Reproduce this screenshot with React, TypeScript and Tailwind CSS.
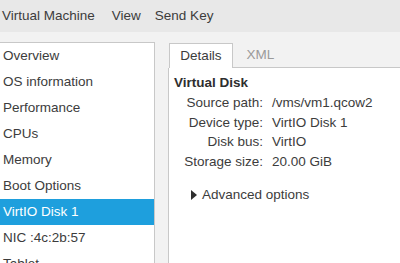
const items = [
    "Overview",
    "OS information",
    "Performance",
    "CPUs",
    "Memory",
    "Boot Options",
    "VirtIO Disk 1",
    "NIC :4c:2b:57",
    "Tablet",
];

const rows = [
    ["Source path:", "/vms/vm1.qcow2"],
    ["Device type:", "VirtIO Disk 1"],
    ["Disk bus:", "VirtIO"],
    ["Storage size:", "20.00 GiB"],
];

const App = () => {
    return (
        <div
            className="w-[400px] h-[263px] overflow-hidden bg-[#f2f2f2] text-[#3c3c3c] text-[13.5px]"
            style={{ fontFamily: '"Liberation Sans", Arial, sans-serif' }}
        >
            <div className="flex items-center h-[32px] bg-[#e8e8e8] pl-[2px]">
                <span className="mr-[17px]">Virtual Machine</span>
                <span className="mr-[14px]">View</span>
                <span>Send Key</span>
            </div>
            <div className="flex pt-[10px]">
                <div className="w-[155px] h-[230px] bg-white border-t border-r border-[#c8c8c8] shrink-0">
                    {items.map((item) => (
                        <div
                            key={item}
                            className={
                                item === "VirtIO Disk 1"
                                    ? "h-[26px] flex items-center pl-[3px] bg-[#1e9fdd] text-white"
                                    : "h-[26px] flex items-center pl-[3px]"
                            }
                        >
                            {item}
                        </div>
                    ))}
                </div>
                <div className="ml-[13px] flex-1 flex flex-col">
                    <div className="flex h-[25px] mt-[1px]">
                        <div className="w-[64px] bg-white border-t border-l border-r border-[#c8c8c8] flex items-center justify-center ml-[1px]">
                            Details
                        </div>
                        <div className="w-[55px] flex items-center justify-center text-[#9a9a9a] border-b border-[#c8c8c8]">
                            XML
                        </div>
                        <div className="flex-1 border-b border-[#c8c8c8]"></div>
                    </div>
                    <div className="flex-1 bg-white border-l border-[#c8c8c8] pl-[5px] pt-[5px]">
                        <div className="font-bold text-[#2e2e2e]">Virtual Disk</div>
                        <div className="grid grid-cols-[89px_1fr] gap-x-[9px]">
                            {rows.map(([label, value]) => (
                                <div key={label} className="contents">
                                    <div className="text-right h-[19.5px] leading-[19.5px]">{label}</div>
                                    <div className="h-[19.5px] leading-[19.5px]">{value}</div>
                                </div>
                            ))}
                        </div>
                        <div className="flex items-center mt-[14px] ml-[17px]">
                            <svg width="6" height="10" viewBox="0 0 6 10" className="mr-[5px]">
                                <path d="M0 0 L6 5 L0 10 Z" fill="#2e2e2e" />
                            </svg>
                            <span>Advanced options</span>
                        </div>
                    </div>
                </div>
            </div>
        </div>
    );
};

export default App;
